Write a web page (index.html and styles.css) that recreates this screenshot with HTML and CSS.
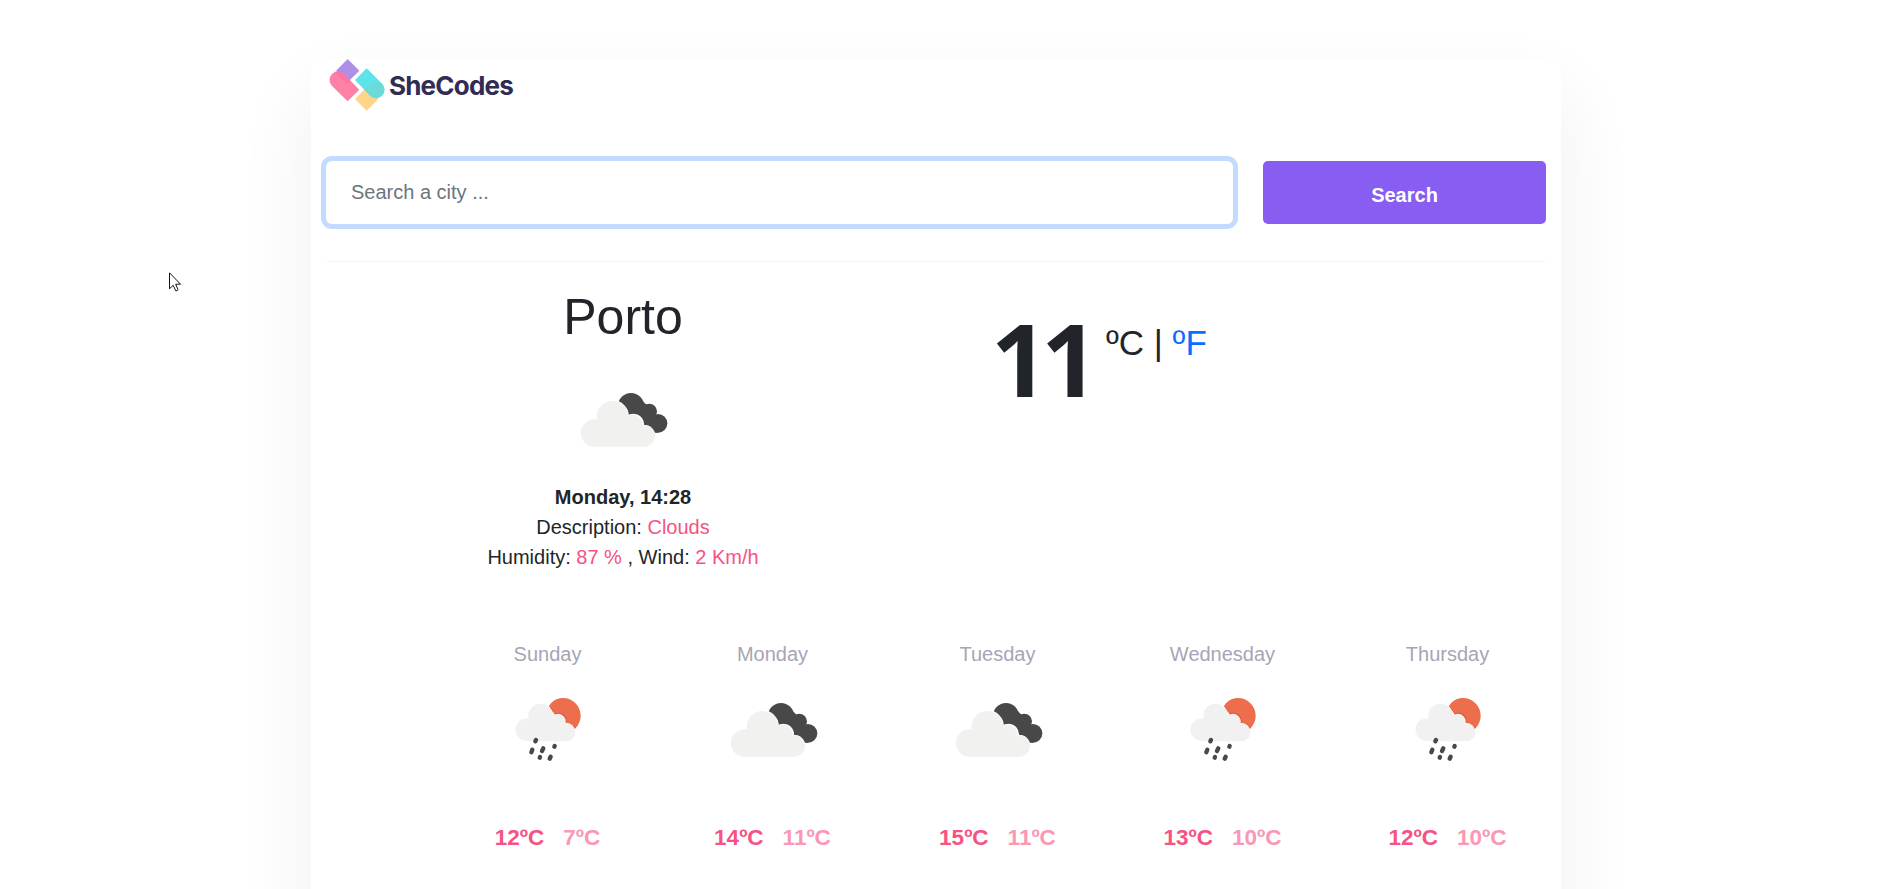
FILE: index.html
```html
<!DOCTYPE html>
<html lang="en">
<head>
<meta charset="utf-8">
<title>Weather</title>
<link rel="stylesheet" href="styles.css">
</head>
<body>
<svg class="symbols" aria-hidden="true">
  <symbol id="clouds" viewBox="120 330 270 180">
    <g fill="#484849">
      <circle cx="273" cy="378" r="39"/><circle cx="328" cy="394" r="23"/><circle cx="354" cy="430" r="28"/>
      <path d="M245 390l60-30 40 40 10 58h-20l-60-50z"/>
    </g>
    <g fill="#2e2e30">
      <path d="M239 366q24 13 27 38l-14-8zM272 401q32-5 38 32l-16-6zM311 434q20-2 33 22l-20-5z"/>
    </g>
    <g fill="#fff"><circle cx="217" cy="410" r="50"/><circle cx="280" cy="433" r="32"/><circle cx="312" cy="468" r="34"/></g>
    <g fill="#f1f1f0">
      <circle cx="217" cy="410" r="47"/><circle cx="164" cy="459" r="41.500"/><circle cx="277" cy="434" r="30"/><circle cx="313" cy="468" r="32"/>
      <path d="M164 440l50-20 90 20 9 60H164z"/>
    </g>
  </symbol>
  <symbol id="rain" viewBox="100 195 210 210">
    <clipPath id="sun-disc"><path d="M208 228A53 53 0 1 1 287 296L250 290z"/></clipPath>
    <g clip-path="url(#sun-disc)">
      <circle cx="250" cy="257" r="53" fill="#ec6e4c"/>
      <g fill="#e8532f"><circle cx="183" cy="258" r="39.500"/><circle cx="236" cy="274" r="25.500"/><circle cx="261" cy="308" r="30"/></g>
    </g>
    <g fill="#f1f1f1">
      <circle cx="183" cy="258" r="37"/><circle cx="141" cy="299" r="33.500"/><circle cx="235" cy="275" r="23.500"/><circle cx="260" cy="306" r="27.500"/>
      <path d="M141 285l40-15 72 10 8 53.500H141z"/>
    </g>
    <g stroke="#484849" stroke-width="13" stroke-linecap="round">
      <path d="M169 330l-2 4M158 359l-3 8M191 355l-4 8M225 348l-1 2M181 381l-1 2M213 380l-3 6"/>
    </g>
  </symbol>
</svg>

<main class="card">
  <header class="brand">
    <svg class="brand-mark" viewBox="86 54 168 162">
      <path fill="#ad8fe8" d="M142 57l35 35-35 35-35-35z"/>
      <path fill="#ffd58a" d="M199 142l35 35-35 35-35-35z"/>
      <path fill="#ff80a5" d="M131 102l46 47-35 35-47-46a25 25 0 0 1 36-36z"/>
      <path fill="#ff70a0" d="M107 95q13-2 24 7l20 20-9 9-40-36z" opacity=".7"/>
      <path fill="#5fe3ea" d="M199 85l46 46a25 25 0 0 1-36 36l-45-47z"/>
      <path fill="#6adbd8" d="M190 146l36-22q10-3 19 7a25 25 0 0 1-36 36z"/>
    </svg>
    <span class="brand-name">SheCodes</span>
  </header>

  <form class="search">
    <input class="search-input" type="text" placeholder="Search a city ...">
    <button class="search-button" type="button">Search</button>
  </form>

  <section class="current">
    <div class="overview">
      <h1 class="city">Porto</h1>
      <svg class="icon-clouds"><use href="#clouds"/></svg>
      <div class="facts">
        <div><strong>Monday, 14:28</strong></div>
        <div>Description: <span class="value">Clouds</span></div>
        <div>Humidity: <span class="value">87 %</span> , Wind: <span class="value">2 Km/h</span></div>
      </div>
    </div>
    <div class="temperature">
      <strong class="degrees">11</strong>
      <span class="units">ºC | <a class="unit-link">ºF</a></span>
    </div>
  </section>

  <section class="forecast">
    <div class="day"><div class="day-name">Sunday</div><div class="day-icon"><svg class="icon-rain"><use href="#rain"/></svg></div><div class="range"><span>12ºC</span><span class="low">7ºC</span></div></div>
    <div class="day"><div class="day-name">Monday</div><div class="day-icon"><svg class="icon-clouds"><use href="#clouds"/></svg></div><div class="range"><span>14ºC</span><span class="low">11ºC</span></div></div>
    <div class="day"><div class="day-name">Tuesday</div><div class="day-icon"><svg class="icon-clouds"><use href="#clouds"/></svg></div><div class="range"><span>15ºC</span><span class="low">11ºC</span></div></div>
    <div class="day"><div class="day-name">Wednesday</div><div class="day-icon"><svg class="icon-rain"><use href="#rain"/></svg></div><div class="range"><span>13ºC</span><span class="low">10ºC</span></div></div>
    <div class="day"><div class="day-name">Thursday</div><div class="day-icon"><svg class="icon-rain"><use href="#rain"/></svg></div><div class="range"><span>12ºC</span><span class="low">10ºC</span></div></div>
  </section>
</main>

<svg class="cursor" viewBox="0 0 13 20"><path d="M.5.8v16l3.700-3.500 2.500 5.500q1.800.4 2.300-1.200L6.700 12.200h4.800z" fill="#fff" stroke="#111122"/></svg>
</body>
</html>
```
FILE: styles.css
```css
* { box-sizing: border-box; }
html { overflow: hidden; }
body {
  margin: 0;
  height: 889px;
  overflow: hidden;
  padding-top: 58px;
  background: #fff;
  color: #212529;
  font: 20px/30px "Liberation Sans", Arial, sans-serif;
}
.symbols { position: absolute; width: 0; height: 0; }
.card {
  width: 1250px;
  height: 1000px;
  margin-left: 311px;
  padding: 0 15px;
  border-radius: 12px;
  background: #fff;
  box-shadow: 0 37px 75px rgba(65, 50, 100, .08);
}
.brand { display: flex; align-items: flex-start; height: 103px; padding-left: 3px; }
.brand-mark { width: 56px; height: 54px; }
.brand-name {
  margin: 13px 0 0 4px;
  font: 700 26px/30px Inter, sans-serif;
  letter-spacing: -.8px;
  color: #322c54;
}
.search {
  display: flex;
  gap: 30px;
  height: 101px;
  padding-bottom: 37px;
  border-bottom: 1px solid #f5f5f7;
}
.search-input {
  width: 907px;
  height: 63px;
  padding: 0 25px;
  border: 0;
  border-radius: 6px;
  outline: 0;
  box-shadow: 0 0 0 5px #c2dbfe;
  font: inherit;
  color: #212529;
}
.search-input::placeholder { color: #6c757d; opacity: 1; }
.search-button {
  width: 283px;
  height: 63px;
  padding: 4px 0 0;
  border: 0;
  border-radius: 5px;
  background: #885df1;
  color: #fff;
  font: 700 20px/30px "Liberation Sans", Arial, sans-serif;
}
.current { display: flex; height: 377px; }
.overview { display: flex; flex-direction: column; align-items: center; width: 594px; padding-top: 25px; }
.city { margin: 0; font-size: 50px; line-height: 60px; font-weight: 400; }
.icon-clouds { display: block; width: 90px; height: 60px; }
.overview .icon-clouds { margin: 43px 0 0 4px; }
.facts { margin-top: 32px; text-align: center; white-space: nowrap; }
.value { color: #f65282; }
.temperature { display: flex; align-items: flex-start; padding-left: 71px; }
.degrees { width: 92px; margin-top: 39px; font: 700 100px/115px "Open Sans", sans-serif; letter-spacing: -7px; }
.units { margin: 61px 0 0 23px; font-size: 35px; line-height: 40px; }
.unit-link { color: #0d6efd; }
.forecast { display: flex; margin-left: 109px; }
.day { width: 225px; flex: none; text-align: center; }
.day-name { color: #a7a5b5; }
.day-icon { display: flex; justify-content: center; height: 154px; padding-top: 26px; }
.icon-rain { display: block; width: 70px; height: 70px; }
.day .icon-clouds { margin: 5px 0 0 4px; }
.range { display: flex; justify-content: center; gap: 19px; font-size: 22.5px; font-weight: 700; color: #f65282; }
.low { color: #fa97b4; }
.cursor { position: absolute; left: 169px; top: 272px; width: 13px; height: 20px; }
```
